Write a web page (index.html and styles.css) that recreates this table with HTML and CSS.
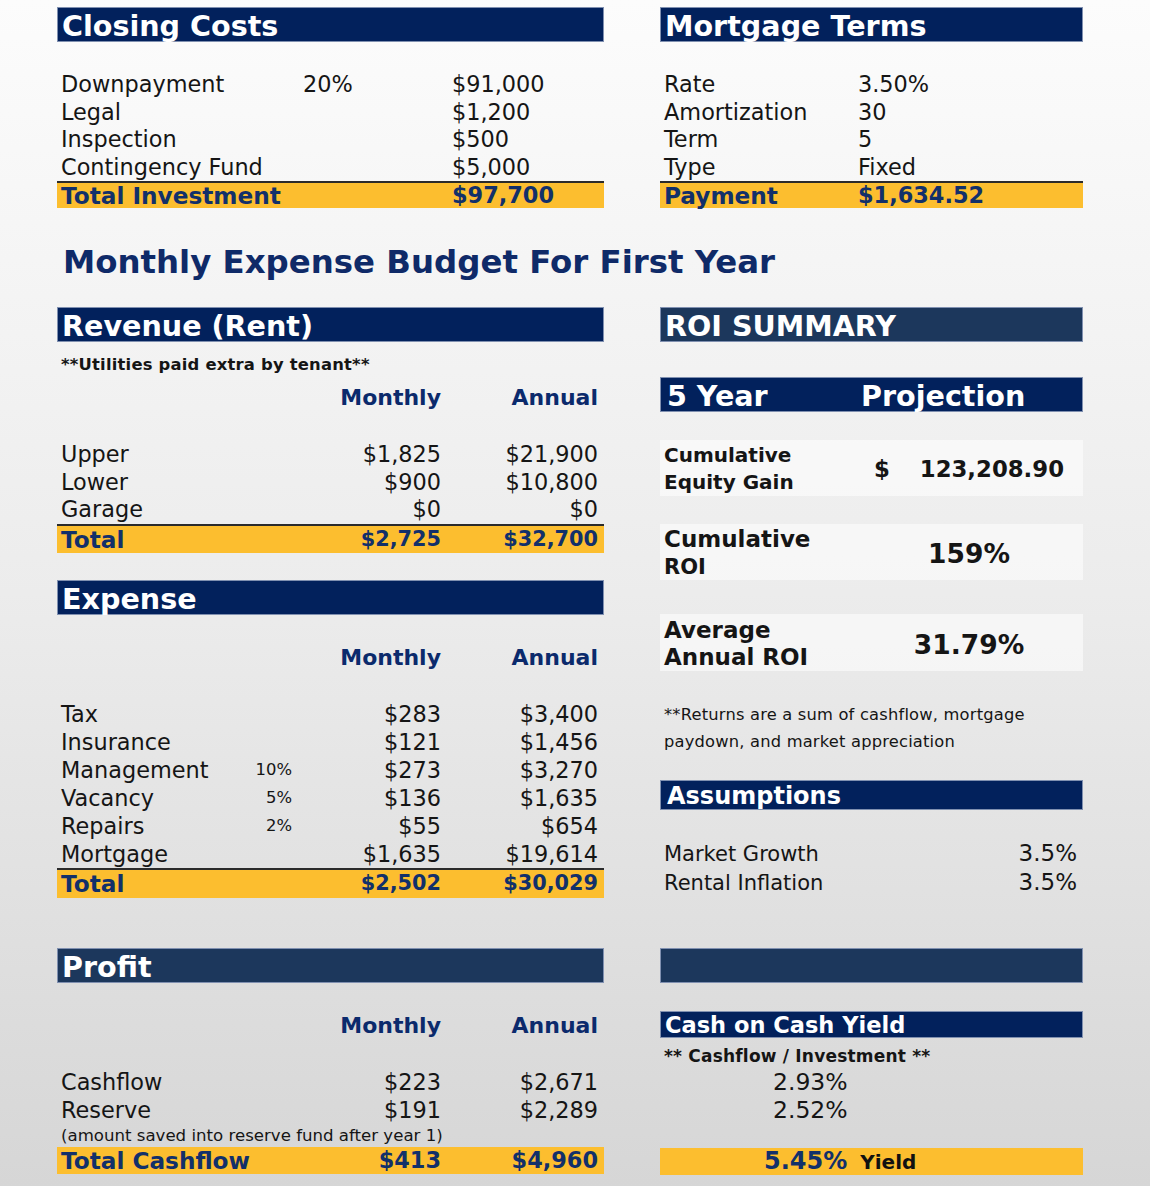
FILE: index.html
```html
<!DOCTYPE html>
<html>
<head>
<meta charset="utf-8">
<link rel="stylesheet" href="styles.css">
</head>
<body>
<div class="page">
  <div class="top">
    <section class="panel">
      <div class="bar">Closing Costs</div>
      <div class="rows cc">
        <div class="cc-row"><span>Downpayment</span><span>20%</span><span>$91,000</span></div>
        <div class="cc-row"><span>Legal</span><span></span><span>$1,200</span></div>
        <div class="cc-row"><span>Inspection</span><span></span><span>$500</span></div>
        <div class="cc-row"><span>Contingency Fund</span><span></span><span>$5,000</span></div>
      </div>
      <div class="cc-row total ruled"><span class="tl">Total Investment</span><span></span><span>$97,700</span></div>
    </section>
    <section class="panel">
      <div class="bar">Mortgage Terms</div>
      <div class="rows cc">
        <div class="mt-row"><span>Rate</span><span>3.50%</span></div>
        <div class="mt-row"><span>Amortization</span><span>30</span></div>
        <div class="mt-row"><span>Term</span><span>5</span></div>
        <div class="mt-row"><span>Type</span><span>Fixed</span></div>
      </div>
      <div class="mt-row total ruled"><span class="tl">Payment</span><span>$1,634.52</span></div>
    </section>
  </div>

  <h1 class="title">Monthly Expense Budget For First Year</h1>

  <div class="bottom">
    <div class="col">
      <div class="bar">Revenue (Rent)</div>
      <div class="note-bold util">**Utilities paid extra by tenant**</div>
      <div class="r hdr"><span></span><span></span><span class="num">Monthly</span><span class="num">Annual</span></div>
      <div class="rows rev">
        <div class="r"><span>Upper</span><span></span><span class="num">$1,825</span><span class="num">$21,900</span></div>
        <div class="r"><span>Lower</span><span></span><span class="num">$900</span><span class="num">$10,800</span></div>
        <div class="r"><span>Garage</span><span></span><span class="num">$0</span><span class="num">$0</span></div>
      </div>
      <div class="r total ruled"><span class="tl">Total</span><span></span><span class="num">$2,725</span><span class="num">$32,700</span></div>

      <div class="bar exp-bar">Expense</div>
      <div class="r hdr hdr-gap"><span></span><span></span><span class="num">Monthly</span><span class="num">Annual</span></div>
      <div class="rows exp">
        <div class="r r28"><span>Tax</span><span></span><span class="num">$283</span><span class="num">$3,400</span></div>
        <div class="r r28"><span>Insurance</span><span></span><span class="num">$121</span><span class="num">$1,456</span></div>
        <div class="r r28"><span>Management</span><span class="pct">10%</span><span class="num">$273</span><span class="num">$3,270</span></div>
        <div class="r r28"><span>Vacancy</span><span class="pct">5%</span><span class="num">$136</span><span class="num">$1,635</span></div>
        <div class="r r28"><span>Repairs</span><span class="pct">2%</span><span class="num">$55</span><span class="num">$654</span></div>
        <div class="r r28"><span>Mortgage</span><span></span><span class="num">$1,635</span><span class="num">$19,614</span></div>
      </div>
      <div class="r total ruled"><span class="tl">Total</span><span></span><span class="num">$2,502</span><span class="num">$30,029</span></div>

      <div class="bar alt profit-bar">Profit</div>
      <div class="r hdr hdr-gap"><span></span><span></span><span class="num">Monthly</span><span class="num">Annual</span></div>
      <div class="rows exp">
        <div class="r r28"><span>Cashflow</span><span></span><span class="num">$223</span><span class="num">$2,671</span></div>
        <div class="r r28"><span>Reserve</span><span></span><span class="num">$191</span><span class="num">$2,289</span></div>
      </div>
      <div class="small-note">(amount saved into reserve fund after year 1)</div>
      <div class="r total tall"><span class="tl wide">Total Cashflow</span><span></span><span class="num">$413</span><span class="num">$4,960</span></div>
    </div>

    <div class="col">
      <div class="bar alt">ROI SUMMARY</div>
      <div class="bar proj"><span>5 Year</span><span>Projection</span></div>

      <div class="box box1">
        <div class="box-label small-label">Cumulative<br>Equity Gain</div>
        <div class="box-val split"><span>$</span><span>123,208.90</span></div>
      </div>
      <div class="box box2">
        <div class="box-label">Cumulative<br><span class="roi-small">ROI</span></div>
        <div class="box-val big">159%</div>
      </div>
      <div class="box box3">
        <div class="box-label">Average<br>Annual ROI</div>
        <div class="box-val big">31.79%</div>
      </div>

      <p class="returns">**Returns are a sum of cashflow, mortgage<br>paydown, and market appreciation</p>

      <div class="bar assume">Assumptions</div>
      <div class="rows as-rows">
        <div class="as-row"><span>Market Growth</span><span class="as-val">3.5%</span></div>
        <div class="as-row"><span>Rental Inflation</span><span class="as-val">3.5%</span></div>
      </div>

      <div class="bar alt empty-bar"></div>
      <div class="bar coc">Cash on Cash Yield</div>
      <div class="note-bold coc-note">** Cashflow / Investment **</div>
      <div class="coc-vals">
        <div>2.93%</div>
        <div>2.52%</div>
      </div>
      <div class="yield"><span class="yield-num">5.45%</span><span class="yield-word">Yield</span></div>
    </div>
  </div>
</div>
</body>
</html>
```

FILE: styles.css
```css
html, body {
  margin: 0;
  padding: 0;
}
body {
  width: 1150px;
  min-height: 1186px;
  background: linear-gradient(to bottom, #fcfcfc 0%, #ececec 50%, #d6d6d6 100%);
  font-family: "DejaVu Sans", Verdana, sans-serif;
  font-size: 22.4px;
  color: #151515;
}
.page {
  padding: 7px 0 0 57px;
}
.top, .bottom {
  display: grid;
  grid-template-columns: 547px 423px;
  column-gap: 56px;
}
.col {
  display: flex;
  flex-direction: column;
}
.bar {
  box-sizing: border-box;
  height: 35px;
  background: #02215c;
  border: 1px solid #8090b0;
  color: #fff;
  font-weight: bold;
  font-size: 28.6px;
  line-height: 34px;
  padding: 1px 0 0 4px;
  white-space: nowrap;
}
.bar.alt {
  background: #1c375c;
}
.rows.cc {
  margin-top: 29px;
}
.cc-row {
  display: grid;
  grid-template-columns: 242px 149px 1fr;
  padding-left: 4px;
  line-height: 27.5px;
}
.mt-row {
  display: grid;
  grid-template-columns: 194px 1fr;
  padding-left: 4px;
  line-height: 27.5px;
}
.total {
  background: #fcbe2f;
  color: #12306a;
  font-weight: bold;
  font-size: 22.4px;
  line-height: 25px;
}
.tl {
  font-size: 23.2px;
  white-space: nowrap;
}
.total.ruled {
  border-top: 2px solid #2b2b2b;
}
.r.total.ruled .num {
  font-size: 20.8px;
}
.total.tall {
  line-height: 27px;
}
.title {
  margin: 34px 0 25px 6px;
  font-size: 32.4px;
  line-height: 40px;
  color: #0f2a68;
  font-weight: bold;
  white-space: nowrap;
}
.note-bold {
  font-size: 16.4px;
  font-weight: bold;
  line-height: 20px;
  padding-left: 4px;
  letter-spacing: 0.2px;
  white-space: nowrap;
}
.util {
  margin-top: 13px;
}
.r {
  display: grid;
  grid-template-columns: 171px 60px 149px 157px;
  padding: 0 6px 0 4px;
  line-height: 27.5px;
}
.r28 {
  line-height: 28px;
}
.num {
  text-align: right;
  white-space: nowrap;
}
.wide {
  white-space: nowrap;
}
.pct {
  font-size: 16.4px;
  text-align: right;
}
.hdr {
  color: #0b2a6c;
  font-weight: bold;
  font-size: 22px;
  line-height: 28px;
  margin-top: 9px;
}
.hdr-gap {
  margin-top: 29px;
}
.rows.rev {
  margin-top: 29px;
}
.rows.exp {
  margin-top: 28px;
}
.exp-bar {
  margin-top: 27px;
}
.profit-bar {
  margin-top: 50px;
}
.small-note {
  font-size: 16.6px;
  line-height: 23px;
  padding-left: 4px;
  white-space: nowrap;
}

/* right column */
.proj {
  margin-top: 35px;
  display: grid;
  grid-template-columns: 194px 1fr;
  padding-left: 6px;
}
.box {
  display: grid;
  grid-template-columns: 214px 190px;
  align-items: center;
  background: rgba(255, 255, 255, 0.55);
  font-weight: bold;
  font-size: 23px;
}
.box-label {
  padding-left: 4px;
  line-height: 27px;
  white-space: nowrap;
}
.small-label {
  font-size: 20px;
}
.roi-small {
  font-size: 21px;
}
.box1 {
  margin-top: 28px;
  padding: 2px 0 0;
  height: 56px;
  box-sizing: border-box;
}
.box1 .box-val {
  font-size: 22.8px;
}
.box2 {
  margin-top: 28px;
  padding-top: 2px;
  height: 56px;
  box-sizing: border-box;
}
.box3 {
  margin-top: 34px;
  padding-top: 3px;
  height: 57px;
  box-sizing: border-box;
}
.box-val {
  text-align: center;
  white-space: nowrap;
}
.split {
  display: flex;
  justify-content: space-between;
}
.big {
  font-size: 26.5px;
}
.returns {
  margin: 30px 0 0;
  padding-left: 4px;
  font-size: 16.3px;
  line-height: 27px;
  letter-spacing: 0.2px;
  white-space: nowrap;
}
.assume {
  margin-top: 25px;
  height: 30px;
  line-height: 28px;
  font-size: 24px;
  padding-left: 6px;
}
.as-rows {
  margin-top: 29px;
}
.as-row {
  display: flex;
  justify-content: space-between;
  align-items: baseline;
  padding: 0 6px 0 4px;
  line-height: 28px;
  font-size: 21px;
}
.as-val {
  font-size: 23px;
}
.empty-bar {
  margin-top: 51px;
}
.coc {
  margin-top: 28px;
  height: 27px;
  line-height: 25px;
  font-size: 22.5px;
}
.coc-note {
  margin-top: 8px;
  font-size: 17px;
}
.coc-vals {
  margin-top: 2px;
  padding-left: 113px;
  line-height: 28px;
  font-size: 23.5px;
}
.yield {
  margin-top: 24px;
  background: #fcbe2f;
  height: 27px;
  line-height: 27px;
  padding-left: 104px;
  font-weight: bold;
  white-space: nowrap;
}
.yield-num {
  color: #12306a;
  font-size: 24px;
}
.yield-word {
  color: #111;
  font-size: 20px;
  margin-left: 13px;
}
```
